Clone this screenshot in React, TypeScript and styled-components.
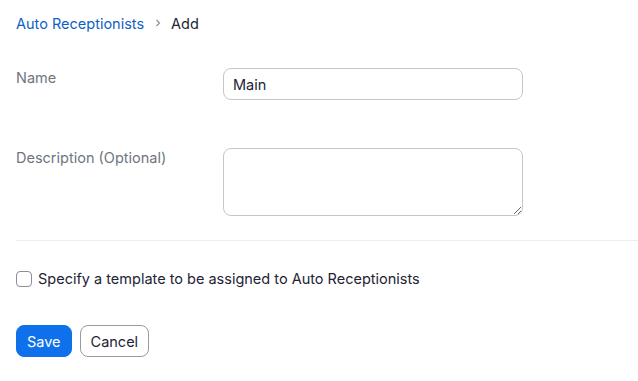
import styled, { createGlobalStyle } from "styled-components";

const GlobalStyle = createGlobalStyle`
  body {
    margin: 0;
    background: #fff;
    font-family: Inter, "Liberation Sans", Arial, sans-serif;
  }
`;

const App = () => {
  return <Page>
    <GlobalStyle />
    <Breadcrumb>
      <CrumbLink>Auto Receptionists</CrumbLink>
      <Chevron viewBox="0 0 10 10">
        <path d="M3.5 2 L6.5 5 L3.5 8" fill="none" stroke="#8c8f96" strokeWidth="1.2" />
      </Chevron>
      <CrumbCurrent>Add</CrumbCurrent>
    </Breadcrumb>
    <FormRow $top={36}>
      <Label>Name</Label>
      <TextInput defaultValue="Main" />
    </FormRow>
    <FormRow $top={48}>
      <Label>Description (Optional)</Label>
      <TextArea />
    </FormRow>
    <Divider />
    <CheckRow>
      <CheckBox type="checkbox" />
      <span>Specify a template to be assigned to Auto Receptionists</span>
    </CheckRow>
    <Actions>
      <Button $primary>Save</Button>
      <Button>Cancel</Button>
    </Actions>
  </Page>
};

const Page = styled.div`
  padding: 14px 0 0 16px;
  font-size: 14.5px;
  color: #232333;
`;

const Breadcrumb = styled.div`
  display: flex;
  align-items: center;
  height: 18px;
  gap: 6px;
`;

const CrumbLink = styled.span`
  color: #0e5fc4;
`;

const Chevron = styled.svg`
  width: 10px;
  height: 10px;
  margin: 0 2px 0 3px;
`;

const CrumbCurrent = styled.span`
  color: #232333;
`;

const FormRow = styled.div<{ $top: number }>`
  display: flex;
  align-items: flex-start;
  margin-top: ${p => p.$top}px;
`;

const Label = styled.label`
  width: 207px;
  color: #6e7680;
  line-height: 18px;
  padding-top: 1px;
`;

const fieldStyles = `
  width: 300px;
  box-sizing: border-box;
  border: 1px solid #c3c6cd;
  border-radius: 8px;
  font-family: inherit;
  font-size: 14.5px;
  color: #232333;
  padding: 0 9px;
  outline: none;
`;

const TextInput = styled.input`
  ${fieldStyles}
  height: 32px;
`;

const TextArea = styled.textarea`
  ${fieldStyles}
  height: 68px;
  resize: vertical;
`;

const Divider = styled.div`
  height: 1px;
  background: #ededed;
  margin-top: 24px;
`;

const CheckRow = styled.label`
  display: flex;
  align-items: center;
  gap: 6px;
  margin-top: 29px;
  color: #232333;
`;

const CheckBox = styled.input`
  appearance: none;
  margin: 0;
  width: 16px;
  height: 16px;
  border: 1px solid #8c8f9a;
  border-radius: 4px;
  background: #fff;
`;

const Actions = styled.div`
  display: flex;
  gap: 8px;
  margin-top: 38px;
`;

const Button = styled.button<{ $primary?: boolean }>`
  height: 32px;
  padding: 0 10px;
  border-radius: 8px;
  font-family: inherit;
  font-size: 14.5px;
  border: 1px solid ${p => (p.$primary ? "#0e71eb" : "#989ba3")};
  background: ${p => (p.$primary ? "#0e71eb" : "#fff")};
  color: ${p => (p.$primary ? "#fff" : "#232333")};
`;

export default App;
